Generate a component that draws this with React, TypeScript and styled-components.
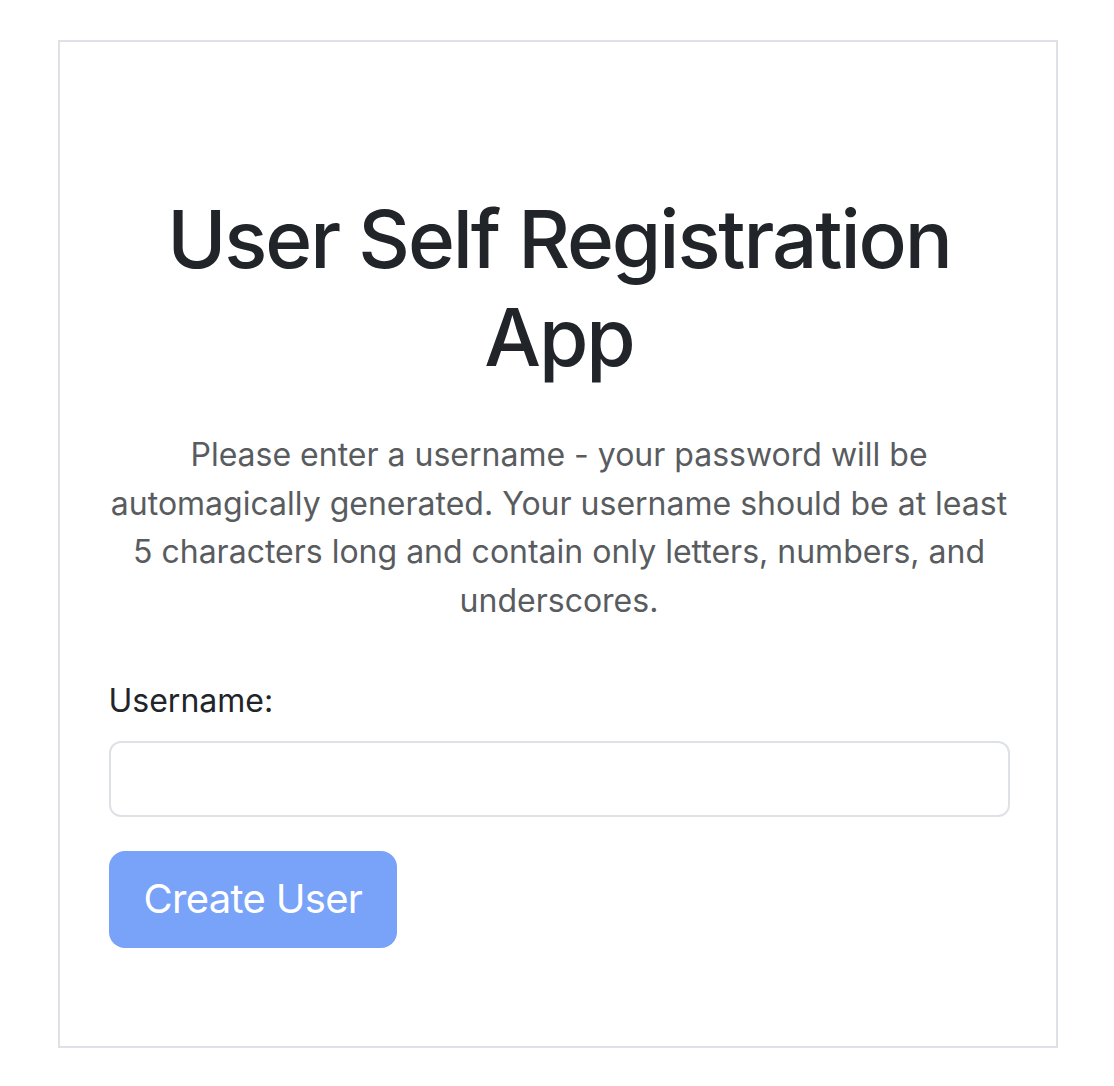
import React from "react";
import styled, { createGlobalStyle } from "styled-components";

const GlobalStyle = createGlobalStyle`
  html, body {
    margin: 0;
    padding: 0;
    background: #ffffff;
  }
  body {
    font-family: Inter, "Noto Sans", "Liberation Sans", sans-serif;
    color: #212529;
  }
  * { box-sizing: border-box; }
`;

const Page = styled.div`
  display: flex;
  justify-content: center;
  padding: 40px 0 38px 1px;
`;

const Card = styled.div`
  width: 1000px;
  border: 2px solid #dee2e6;
  padding: 148px 46px 98px 49px;
  display: flex;
  flex-direction: column;
`;

const Title = styled.h1`
  margin: 0 0 45px;
  font-size: 80px;
  line-height: 98px;
  font-weight: 500;
  text-align: center;
  color: #212529;
  letter-spacing: -2.1px;
`;

const Lead = styled.p`
  margin: 0 0 51px;
  font-size: 32px;
  line-height: 48.7px;
  text-align: center;
  color: #595c5f;
`;

const Label = styled.label`
  display: block;
  font-size: 32px;
  line-height: 48px;
  color: #212529;
  margin-bottom: 16px;
`;

const Input = styled.input`
  display: block;
  width: 100%;
  height: 76px;
  border: 2px solid #dee2e6;
  border-radius: 12px;
  padding: 0 24px;
  font-size: 32px;
  font-family: inherit;
  outline: none;
  margin-bottom: 34px;
`;

const Button = styled.button`
  align-self: flex-start;
  height: 97px;
  padding: 0 35px;
  border: 0;
  border-radius: 16px;
  background: #78a3f8;
  color: #ffffff;
  font-family: inherit;
  font-size: 40px;
  line-height: 60px;
  font-weight: 400;
  letter-spacing: -0.7px;
  cursor: default;
`;

export default function App() {
  return (
    <>
      <GlobalStyle />
      <Page>
        <Card>
          <Title>User Self Registration App</Title>
          <Lead>
            Please enter a username - your password will be automagically
            generated. Your username should be at least 5 characters long and
            contain only letters, numbers, and underscores.
          </Lead>
          <Label htmlFor="username">Username:</Label>
          <Input id="username" type="text" />
          <Button type="button" disabled>
            Create User
          </Button>
        </Card>
      </Page>
    </>
  );
}
